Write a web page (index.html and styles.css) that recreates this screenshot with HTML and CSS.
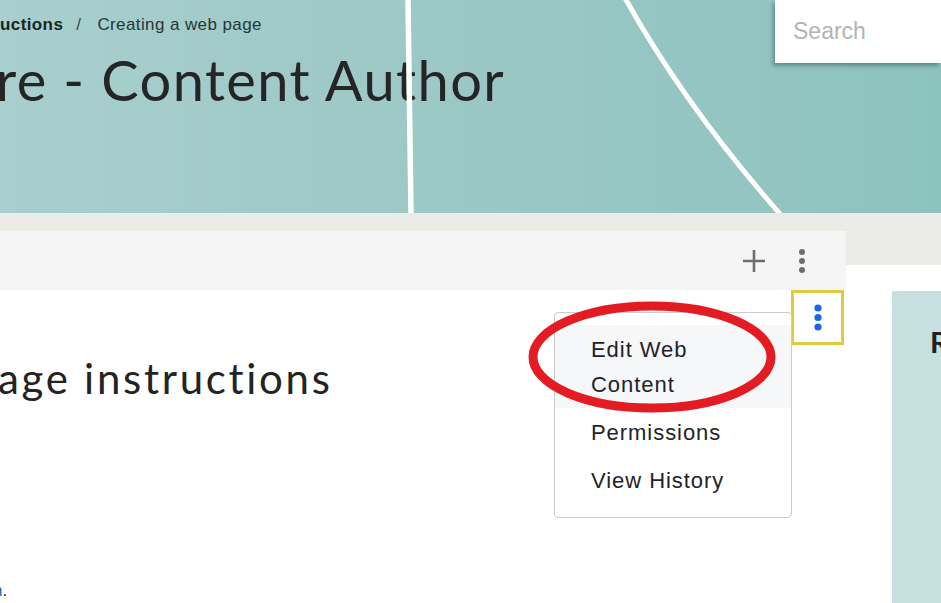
FILE: index.html
```html
<!DOCTYPE html>
<html lang="en">
<head>
<meta charset="utf-8">
<title>Creating a web page</title>
<link rel="stylesheet" href="styles.css">
</head>
<body>
<header class="hero">
  <div class="hero-text">
    <nav class="crumbs"><b>uctions</b><span class="sep">/</span><span>Creating a web page</span></nav>
    <h1 class="hero-title">re - Content Author</h1>
  </div>
  <div class="search">Search</div>
  <svg class="hero-lines" width="941" height="213" viewBox="0 0 941 213">
    <path d="M408 0 C409 70 410 140 411 213" fill="none" stroke="#fff" stroke-width="5.5"/>
    <path d="M625 -2 C665 70 715 140 781 215" fill="none" stroke="#fff" stroke-width="5"/>
  </svg>
</header>
<div class="band"></div>
<div class="layout">
  <main class="main">
    <div class="toolbar">
      <svg width="24" height="24" viewBox="0 0 24 24"><path d="M12 1v22M1 12h22" stroke="#6e6e6e" stroke-width="2.6" fill="none"/></svg>
      <svg width="24" height="24" viewBox="0 0 24 24"><circle cx="12" cy="3" r="3" fill="#6e6e6e"/><circle cx="12" cy="12" r="3" fill="#6e6e6e"/><circle cx="12" cy="21" r="3" fill="#6e6e6e"/></svg>
    </div>
    <div class="content">
      <div class="content-head">
        <button class="kebab" type="button">
          <svg width="10" height="28" viewBox="0 0 10 28"><circle cx="5" cy="4" r="3.6" fill="#1a66e8"/><circle cx="5" cy="13.5" r="3.6" fill="#1a66e8"/><circle cx="5" cy="23" r="3.6" fill="#1a66e8"/></svg>
        </button>
      </div>
      <h2 class="page-title">age instructions</h2>
      <p class="note"><a href="#">n</a>.</p>
      <ul class="menu">
        <li class="active">Edit Web<br>Content</li>
        <li>Permissions</li>
        <li>View History</li>
      </ul>
      <svg class="circle-mark" width="254" height="118" viewBox="0 0 254 118">
        <ellipse cx="126" cy="58" rx="119" ry="51" fill="none" stroke="#e31c24" stroke-width="9"/>
      </svg>
    </div>
  </main>
  <aside class="sidebar"><div class="side-title">R</div></aside>
</div>
</body>
</html>
```
FILE: styles.css
```css
html, body {
  margin: 0;
  padding: 0;
  overflow: hidden;
  background: #fff;
  width: 941px;
  height: 603px;
}
body {
  font-family: "Liberation Sans", Arial, sans-serif;
  color: #222;
}
.hero {
  position: relative;
  height: 213px;
  overflow: hidden;
  display: flex;
  justify-content: space-between;
  background: linear-gradient(90deg, #a8cfce 0%, #9cc8c6 45%, #8dc3be 100%);
}
.hero-text {
  padding-top: 15px;
}
.crumbs {
  font-size: 17px;
  line-height: 20px;
  letter-spacing: 0.4px;
  color: #263736;
  white-space: nowrap;
}
.crumbs b {
  color: #1c2323;
}
.sep {
  margin: 0 16px 0 13px;
  color: #37494a;
}
.hero-title {
  margin: 17px 0 0 -4px;
  font-family: Lato, "Open Sans", sans-serif;
  font-weight: 400;
  font-size: 56px;
  line-height: 56px;
  letter-spacing: 1.4px;
  color: #252525;
  white-space: nowrap;
}
.search {
  width: 148px;
  height: 63px;
  padding-left: 18px;
  background: #fff;
  box-shadow: -2px 3px 4px rgba(40, 70, 70, 0.45);
  font-size: 23px;
  line-height: 63px;
  color: #b3b3b3;
  position: relative;
  z-index: 2;
}
.hero-lines {
  position: absolute;
  left: 0;
  top: 0;
  z-index: 1;
}
.band {
  height: 52px;
  background: #ebebe8;
}
.layout {
  display: flex;
  margin-top: -34px;
}
.main {
  width: 846px;
  flex: none;
}
.toolbar {
  height: 59px;
  background: #f5f5f5;
  display: flex;
  justify-content: flex-end;
  align-items: center;
  gap: 24px;
  padding-right: 32px;
  box-sizing: border-box;
}
.content {
  position: relative;
  height: 313px;
}
.content-head {
  display: flex;
  justify-content: flex-end;
  padding-right: 2px;
}
.kebab {
  width: 53px;
  height: 55px;
  border: 3px solid #ddcd3e;
  background: #fff;
  padding: 0;
  display: flex;
  align-items: center;
  justify-content: center;
}
.page-title {
  margin: 9px 0 0 -2px;
  font-family: Lato, "Open Sans", sans-serif;
  font-weight: 400;
  font-size: 42px;
  line-height: 48px;
  letter-spacing: 2.7px;
  color: #232323;
  white-space: nowrap;
}
.note {
  margin: 179px 0 0 -7px;
  font-size: 17px;
  line-height: 20px;
}
.note a {
  color: #1a66c8;
  text-decoration: none;
}
.menu {
  position: absolute;
  left: 554px;
  top: 22px;
  width: 236px;
  margin: 0;
  padding: 12px 0 13px;
  list-style: none;
  background: #fff;
  border: 1px solid #cccccc;
  border-radius: 4px;
  font-size: 22px;
  letter-spacing: 0.95px;
  line-height: 35px;
  color: #1f2328;
}
.menu li {
  padding: 6.5px 0 6.5px 36px;
}
.menu li.active {
  background: #f5f7f8;
}
.circle-mark {
  position: absolute;
  left: 526px;
  top: 9px;
}
.sidebar {
  flex: none;
  width: 300px;
  margin-left: 46px;
  margin-top: 60px;
  height: 320px;
  background: #c5e0df;
}
.side-title {
  padding: 34px 0 0 38px;
  font-family: Lato, "Open Sans", sans-serif;
  font-weight: 700;
  font-size: 29px;
  line-height: 34px;
  color: #222;
}
```
